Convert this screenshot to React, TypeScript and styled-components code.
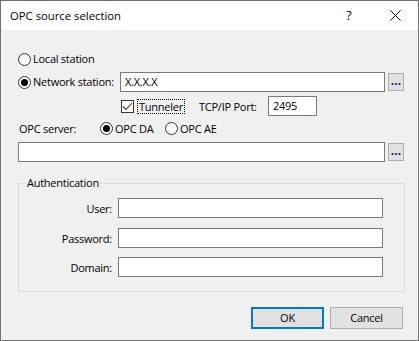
import React from "react";
import styled, { createGlobalStyle } from "styled-components";

const Global = createGlobalStyle`
  html, body { margin: 0; padding: 0; background: #f0f0f0; }
  body { font-family: "Open Sans", "Noto Sans", sans-serif; font-size: 11px; letter-spacing: -0.25px; color: #000; }
  * { box-sizing: border-box; }
`;

const Window = styled.div`
  width: 419px;
  height: 341px;
  border: 1px solid #707070;
  background: #f0f0f0;
  display: flex;
  flex-direction: column;
  overflow: hidden;
`;

const TitleBar = styled.div`
  height: 29px;
  flex: none;
  background: #fff;
  display: flex;
  align-items: stretch;
`;

const Title = styled.div`
  flex: 1;
  display: flex;
  align-items: center;
  padding-left: 9px;
  padding-bottom: 1px;
  font-size: 11.3px;
  letter-spacing: 0;
`;

const CaptionButton = styled.div`
  width: 46px;
  display: flex;
  align-items: center;
  justify-content: center;
  font-size: 12.5px;
  letter-spacing: 0;
  padding-bottom: 1px;
`;

const Body = styled.div`
  flex: 1;
  display: flex;
  flex-direction: column;
  padding: 22px 13px 0 17px;
`;

const Row = styled.div<{ $mt: number; $h: number }>`
  margin-top: ${(p) => p.$mt}px;
  height: ${(p) => p.$h}px;
  display: flex;
  align-items: center;
`;

const LineGrid = styled.div<{ $mt: number; $cols: string }>`
  margin-top: ${(p) => p.$mt}px;
  height: 20px;
  width: 100%;
  padding-right: 1px;
  display: grid;
  grid-template-columns: ${(p) => p.$cols};
  align-items: center;
`;

const OptionLabel = styled.label`
  display: flex;
  align-items: center;
  gap: 2px;
  white-space: nowrap;
  line-height: 14px;
`;

const Radio = styled.span<{ $checked?: boolean }>`
  width: 13px;
  height: 13px;
  flex: none;
  border: 1px solid #333;
  border-radius: 50%;
  background: #fff;
  display: flex;
  align-items: center;
  justify-content: center;
  &::after {
    content: "";
    width: 7px;
    height: 7px;
    border-radius: 50%;
    background: ${(p) => (p.$checked ? "#000" : "transparent")};
  }
`;

const CheckBox = styled.span`
  width: 13px;
  height: 13px;
  flex: none;
  border: 1px solid #333;
  background: #fff;
  display: flex;
  align-items: center;
  justify-content: center;
`;

const FocusText = styled.span`
  border: 1px dotted #000;
  padding: 0 1px;
  line-height: 13px;
  margin-left: 1px;
`;

const ServerLabel = styled.span`
  padding-left: 1px;
`;

const TextBox = styled.div`
  height: 20px;
  border: 1px solid #7a7a7a;
  background: #fff;
  display: flex;
  align-items: center;
  padding-left: 4px;
  padding-bottom: 1px;
`;

const BrowseButton = styled.div`
  width: 16px;
  height: 18px;
  border: 1px solid #adadad;
  background: #e1e1e1;
  color: #14146e;
  font-size: 12px;
  font-weight: 700;
  line-height: 12px;
  display: flex;
  justify-content: center;
  align-items: flex-end;
  padding-bottom: 3px;
  letter-spacing: 0;
`;

const TunnelGrid = styled.div`
  margin-top: 4px;
  height: 20px;
  display: grid;
  grid-template-columns: 103px 78px 69px 49px;
  align-items: center;
`;

const Group = styled.div`
  margin-top: 21px;
  height: 109px;
  border: 1px solid #dcdcdc;
  position: relative;
  padding-top: 14px;
  display: flex;
  flex-direction: column;
`;

const Legend = styled.span`
  position: absolute;
  left: 7px;
  top: -9px;
  padding: 0 1px;
  background: #f0f0f0;
  line-height: 16px;
`;

const Field = styled.div<{ $mt: number }>`
  margin-top: ${(p) => p.$mt}px;
  display: grid;
  grid-template-columns: 93px 265px;
  column-gap: 6px;
  align-items: center;
`;

const FieldLabel = styled.span`
  text-align: right;
`;

const ButtonRow = styled.div`
  margin-top: 15px;
  display: flex;
  justify-content: flex-end;
  gap: 6px;
  padding-right: 2px;
`;

const DialogButton = styled.div<{ $default?: boolean }>`
  width: 73px;
  height: 22px;
  background: #e1e1e1;
  border: ${(p) => (p.$default ? "2px solid #0078d7" : "1px solid #adadad")};
  display: flex;
  align-items: center;
  justify-content: center;
  padding-bottom: 1px;
`;

export default function App() {
  return (
    <>
      <Global />
      <Window>
        <TitleBar>
          <Title>OPC source selection</Title>
          <CaptionButton>?</CaptionButton>
          <CaptionButton>
            <svg width="11" height="11" viewBox="0 0 11 11">
              <path d="M0.5 0.5 L10.5 10.5 M10.5 0.5 L0.5 10.5" stroke="#000" strokeWidth="1" />
            </svg>
          </CaptionButton>
        </TitleBar>
        <Body>
          <Row $mt={0} $h={14}>
            <OptionLabel>
              <Radio />
              Local station
            </OptionLabel>
          </Row>
          <LineGrid $mt={6} $cols="102px 265px 3px 16px">
            <OptionLabel>
              <Radio $checked />
              Network station:
            </OptionLabel>
            <TextBox>X.X.X.X</TextBox>
            <span />
            <BrowseButton>...</BrowseButton>
          </LineGrid>
          <TunnelGrid>
            <span />
            <OptionLabel>
              <CheckBox>
                <svg width="11" height="11" viewBox="0 0 11 11">
                  <path d="M1 5.5 L4 8.5 L10 2" fill="none" stroke="#333" strokeWidth="1.1" />
                </svg>
              </CheckBox>
              <FocusText>Tunneler</FocusText>
            </OptionLabel>
            <span>TCP/IP Port:</span>
            <TextBox>2495</TextBox>
          </TunnelGrid>
          <Row $mt={5} $h={15}>
            <LineGrid $mt={0} $cols="82px 65px auto">
              <ServerLabel>OPC server:</ServerLabel>
              <OptionLabel>
                <Radio $checked />
                OPC DA
              </OptionLabel>
              <OptionLabel>
                <Radio />
                OPC AE
              </OptionLabel>
            </LineGrid>
          </Row>
          <LineGrid $mt={6} $cols="367px 3px 16px">
            <TextBox />
            <span />
            <BrowseButton>...</BrowseButton>
          </LineGrid>
          <Group>
            <Legend>Authentication</Legend>
            <Field $mt={0}>
              <FieldLabel>User:</FieldLabel>
              <TextBox />
            </Field>
            <Field $mt={10}>
              <FieldLabel>Password:</FieldLabel>
              <TextBox />
            </Field>
            <Field $mt={9}>
              <FieldLabel>Domain:</FieldLabel>
              <TextBox />
            </Field>
          </Group>
          <ButtonRow>
            <DialogButton $default>OK</DialogButton>
            <DialogButton>Cancel</DialogButton>
          </ButtonRow>
        </Body>
      </Window>
    </>
  );
}
